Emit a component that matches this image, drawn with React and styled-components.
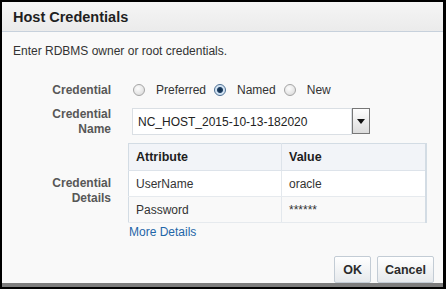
import React from 'react';
import styled, { createGlobalStyle } from 'styled-components';

const GlobalStyle = createGlobalStyle`
  html, body { margin: 0; padding: 0; background: #000; }
  body { font-family: "Liberation Sans", Arial, sans-serif; }
`;

const Frame = styled.div`
  width: 446px;
  height: 289px;
  box-sizing: border-box;
  padding: 2px 3px 2px 2px;
  background: #000;
`;

const Dialog = styled.div`
  height: 100%;
  display: flex;
  flex-direction: column;
  background: #f9f9f9;
  border-bottom: 4px solid #7d7d7d;
  box-sizing: border-box;
`;

const Header = styled.div`
  height: 29px;
  display: flex;
  align-items: center;
  padding-left: 11px;
  background: linear-gradient(#f5f5f5, #ebebeb);
  border-bottom: 1px solid #c7d1dc;
  font-size: 14.5px;
  font-weight: bold;
  color: #1f1f1f;
`;

const Body = styled.div`
  flex: 1;
  display: flex;
  flex-direction: column;
  padding: 12px 9px 0 11px;
`;

const Intro = styled.div`
  font-size: 12px;
  line-height: 14px;
  color: #333;
  margin-bottom: 22px;
`;

const Form = styled.div`
  display: grid;
  grid-template-columns: 98px 1fr;
  column-gap: 17px;
  row-gap: 8px;
`;

const Label = styled.div`
  font-size: 12px;
  font-weight: bold;
  line-height: 15px;
  color: #575757;
  text-align: right;
  align-self: ${p => p.$align || 'center'};
  margin: ${p => p.$margin || '0'};
`;

const RadioGroup = styled.div`
  height: 20px;
  display: flex;
  align-items: center;
  padding-left: 5px;
`;

const RadioItem = styled.label`
  display: flex;
  align-items: center;
  gap: 11px;
  margin-right: 8px;
  font-size: 12px;
  color: #333;
`;

const RadioDot = styled.span`
  width: 12px;
  height: 12px;
  box-sizing: border-box;
  border-radius: 50%;
  border: 1px solid ${p => (p.$checked ? '#4c6f93' : '#a5a5a5')};
  background: ${p =>
    p.$checked
      ? 'radial-gradient(circle, #102a46 0, #1e3f63 2.5px, #cfe1f2 3.5px, #e8f0f8 100%)'
      : 'radial-gradient(circle at 40% 35%, #fdfdfd, #d6d6d6)'};
`;

const Select = styled.div`
  display: flex;
  align-items: flex-start;
  margin-left: 4px;
`;

const SelectValue = styled.div`
  width: 220px;
  height: 27px;
  box-sizing: border-box;
  border: 1px solid #dadfe4;
  background: #fff;
  padding-left: 5px;
  display: flex;
  align-items: center;
  font-size: 12px;
  color: #222;
`;

const SelectButton = styled.div`
  width: 18px;
  height: 26px;
  box-sizing: border-box;
  border: 1px solid #777;
  background: linear-gradient(#fefefe, #dcdcdc);
  display: flex;
  align-items: center;
  justify-content: center;
`;

const Details = styled.div`
  display: flex;
  flex-direction: column;
  align-items: flex-start;
`;

const Table = styled.table`
  width: 299px;
  border-collapse: collapse;
  border: 1px solid #d3dce4;
  border-right-width: 2px;
  font-size: 12px;
  color: #333;
`;

const Th = styled.th`
  height: 26px;
  padding: 0 0 0 7px;
  text-align: left;
  font-size: 12.5px;
  font-weight: bold;
  color: #1e1e1e;
  background: #f2f4f8;
  border-right: 1px solid #dde3ea;
  border-bottom: 1px solid #dde3ea;
  width: ${p => p.$w || 'auto'};
`;

const Row = styled.tr`
  background: ${p => (p.$alt ? '#f9f9f9' : '#fff')};
`;

const Td = styled.td`
  height: 25px;
  padding: 0 0 0 7px;
  border-right: 1px solid #e3e8ed;
  border-bottom: 1px solid #e6eaee;
`;

const Link = styled.a`
  font-size: 12px;
  line-height: 14px;
  margin-top: 2px;
  padding-left: 1px;
  color: #1f66a8;
  text-decoration: none;
  cursor: pointer;
`;

const Footer = styled.div`
  margin-top: auto;
  display: flex;
  justify-content: flex-end;
  gap: 6px;
`;

const Button = styled.button`
  height: 27px;
  padding: 0 ${p => p.$pad || 7}px;
  border: 1px solid #c3ccd5;
  border-radius: 2px;
  background: linear-gradient(#ffffff, #e6e9ec);
  font-family: "Liberation Sans", Arial, sans-serif;
  font-size: 12.5px;
  font-weight: bold;
  color: #2b2b2b;
`;

export default function App() {
  return (
    <>
      <GlobalStyle />
      <Frame>
        <Dialog>
          <Header>Host Credentials</Header>
          <Body>
            <Intro>Enter RDBMS owner or root credentials.</Intro>
            <Form>
              <Label>Credential</Label>
              <RadioGroup>
                <RadioItem><RadioDot />Preferred</RadioItem>
                <RadioItem><RadioDot $checked />Named</RadioItem>
                <RadioItem><RadioDot />New</RadioItem>
              </RadioGroup>

              <Label $align="start" $margin="-1px 0 -3px">Credential<br />Name</Label>
              <Select>
                <SelectValue>NC_HOST_2015-10-13-182020</SelectValue>
                <SelectButton>
                  <svg width="8" height="5" viewBox="0 0 8 5">
                    <path d="M0 0h8L4 5z" fill="#111" />
                  </svg>
                </SelectButton>
              </Select>

              <Label>Credential<br />Details</Label>
              <Details>
                <Table>
                  <thead>
                    <tr>
                      <Th $w="145px">Attribute</Th>
                      <Th>Value</Th>
                    </tr>
                  </thead>
                  <tbody>
                    <Row>
                      <Td>UserName</Td>
                      <Td>oracle</Td>
                    </Row>
                    <Row $alt>
                      <Td>Password</Td>
                      <Td>******</Td>
                    </Row>
                  </tbody>
                </Table>
                <Link>More Details</Link>
              </Details>
            </Form>
            <Footer>
              <Button $pad={8}>OK</Button>
              <Button>Cancel</Button>
            </Footer>
          </Body>
        </Dialog>
      </Frame>
    </>
  );
}
